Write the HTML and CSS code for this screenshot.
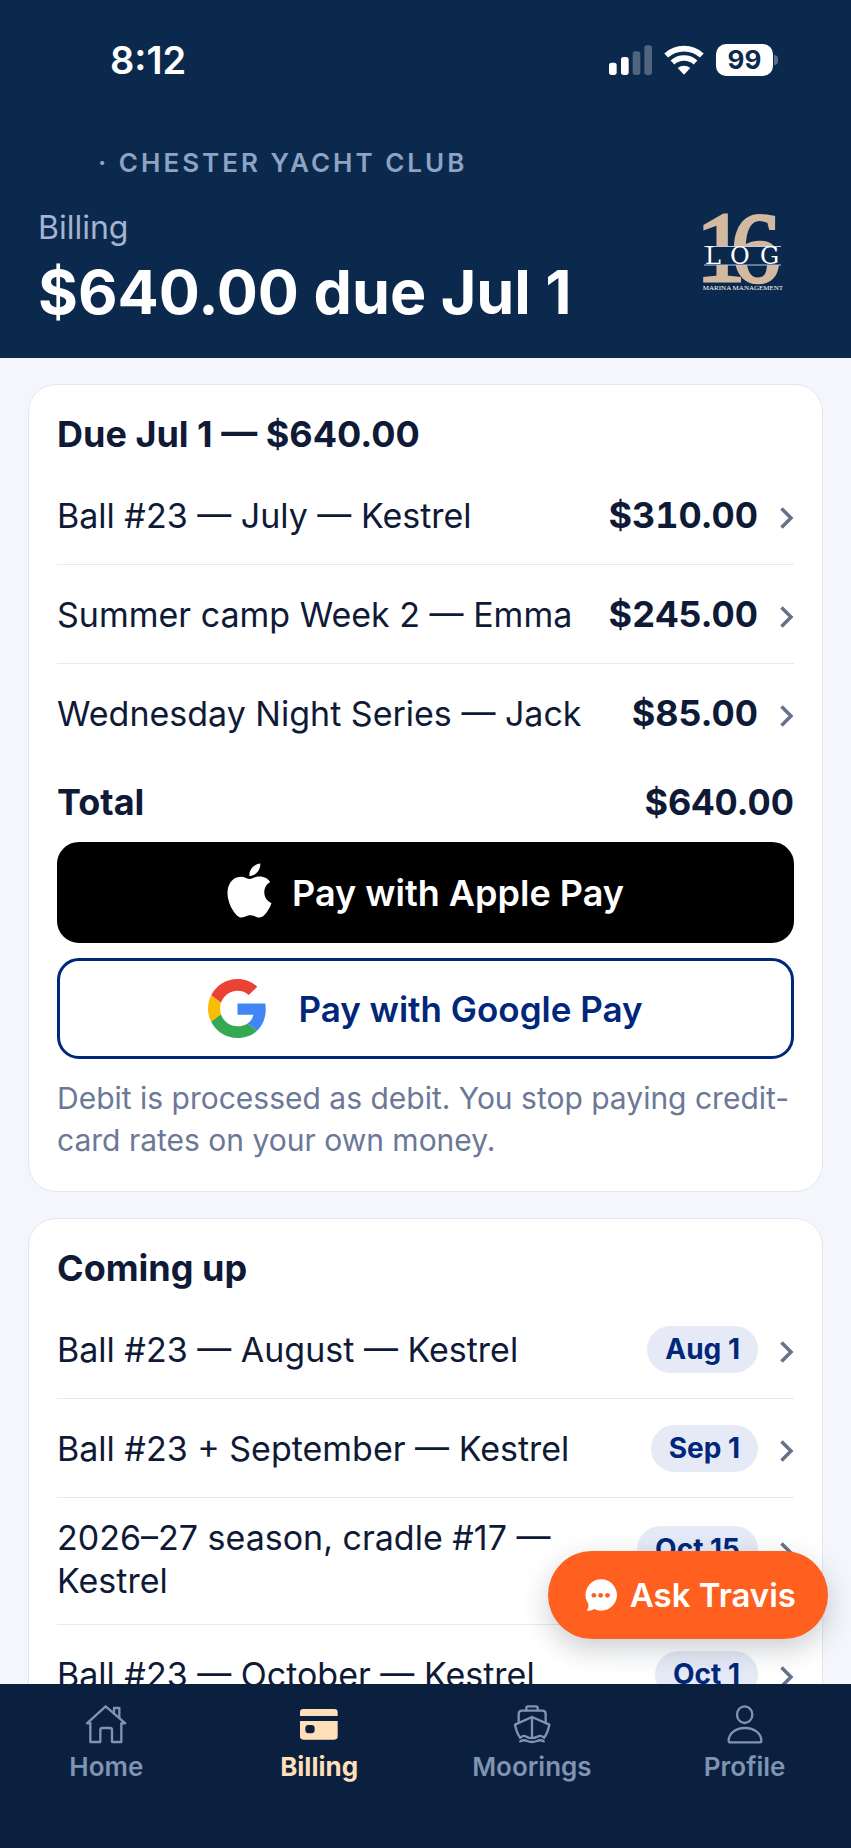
FILE: index.html
```html
<!DOCTYPE html>
<html lang="en">
<head>
<meta charset="utf-8">
<meta name="viewport" content="width=device-width, initial-scale=1">
<title>Billing</title>
<link rel="stylesheet" href="styles.css">
</head>
<body>
<svg class="sprite" aria-hidden="true">
  <symbol id="chevron" viewBox="0 0 14 22"><path d="M1.500 1.500l9.500 9.500-9.500 9.500" fill="none" stroke="currentColor" stroke-width="3.500"/></symbol>
</svg>
<div class="app">
  <header class="header">
    <div class="status">
      <span class="time">8:12</span>
      <div class="indicators">
        <svg class="signal" viewBox="57 45 129 90" fill="#fff" aria-label="Signal">
          <rect x="57" y="98" width="23" height="37" rx="8"/>
          <rect x="93" y="81" width="23" height="54" rx="8"/>
          <g opacity=".28"><rect x="128" y="64" width="23" height="71" rx="8"/><rect x="163" y="46" width="23" height="89" rx="8"/></g>
        </svg>
        <svg class="wifi" viewBox="220 44 120 91" fill="none" stroke="#fff" stroke-width="17" aria-label="Wi-Fi">
          <path d="M226 76A80 80 0 0 1 334 76"/>
          <path d="M245 97A52 52 0 0 1 315 97"/>
          <path d="M261 114A28 28 0 0 1 299 114L280 134z" fill="#fff" stroke="none"/>
        </svg>
        <div class="battery"><span class="battery-level">99</span><span class="battery-nub"></span></div>
      </div>
    </div>
    <p class="club"><span>·</span> CHESTER YACHT CLUB</p>
    <div class="heading">
      <div>
        <p class="eyebrow">Billing</p>
        <h1 class="amount">$640.00 due Jul 1</h1>
      </div>
      <svg class="logo" viewBox="0 0 80 80" role="img" aria-label="16 Log Marina Management">
        <text class="logo-number" x="-7 28" y="69">16</text>
        <rect class="logo-band" x="0" y="34" width="80" height="19"/>
        <path d="M1 34.500h77M1 53h77" stroke="#b9cbe2" stroke-width="1"/>
        <text class="logo-word" x="2 27 57" y="52">LOG</text>
        <text class="logo-tag" x="40" y="78" text-anchor="middle">MARINA MANAGEMENT</text>
      </svg>
    </div>
  </header>

  <main class="content">
    <section class="card">
      <h2 class="card-title">Due Jul 1 — $640.00</h2>
      <ul class="rows">
        <li><a class="row" href="#"><span class="label">Ball #23 — July — Kestrel</span><span class="price">$310.00</span><svg class="chevron"><use href="#chevron"/></svg></a></li>
        <li><a class="row" href="#"><span class="label">Summer camp Week 2 — Emma</span><span class="price">$245.00</span><svg class="chevron"><use href="#chevron"/></svg></a></li>
        <li><a class="row" href="#"><span class="label">Wednesday Night Series — Jack</span><span class="price">$85.00</span><svg class="chevron"><use href="#chevron"/></svg></a></li>
      </ul>
      <p class="total"><span>Total</span><span>$640.00</span></p>
      <div class="pay">
        <button class="pay-button apple" type="button">
          <svg class="apple-icon" viewBox="2 0 20 24" fill="#fff" aria-hidden="true"><path d="M12.152 6.896c-.948 0-2.415-1.078-3.96-1.04-2.04.027-3.91 1.183-4.961 3.014-2.117 3.675-.546 9.103 1.519 12.09 1.013 1.454 2.208 3.09 3.792 3.039 1.52-.065 2.09-.987 3.935-.987 1.831 0 2.35.987 3.96.948 1.637-.026 2.676-1.48 3.676-2.948 1.156-1.688 1.636-3.325 1.662-3.415-.039-.013-3.182-1.221-3.22-4.857-.026-3.04 2.48-4.494 2.597-4.559-1.429-2.09-3.623-2.324-4.39-2.376-2-.156-3.675 1.09-4.61 1.09zM15.53 3.83c.843-1.012 1.4-2.427 1.245-3.83-1.207.052-2.662.805-3.532 1.818-.78.896-1.454 2.338-1.273 3.714 1.338.104 2.715-.688 3.559-1.701"/></svg>
          Pay with Apple Pay
        </button>
        <button class="pay-button google" type="button">
          <svg class="google-icon" viewBox="0 0 48 48" aria-hidden="true">
            <path fill="#ea4335" d="M24 9.500c3.540 0 6.710 1.220 9.210 3.600l6.850-6.850C35.900 2.380 30.470 0 24 0 14.620 0 6.510 5.380 2.560 13.220l7.980 6.190C12.430 13.720 17.740 9.500 24 9.500z"/>
            <path fill="#4285f4" d="M46.980 24.550c0-1.570-.15-3.090-.38-4.550H24v9.020h12.940c-.58 2.960-2.260 5.480-4.780 7.180l7.730 6c4.510-4.180 7.090-10.360 7.090-17.650z"/>
            <path fill="#fbbc05" d="M10.530 28.590c-.48-1.450-.76-2.990-.76-4.590s.27-3.140.76-4.590l-7.980-6.190C.92 16.460 0 20.120 0 24c0 3.880.92 7.540 2.560 10.780l7.970-6.190z"/>
            <path fill="#34a853" d="M24 48c6.480 0 11.930-2.130 15.890-5.810l-7.730-6c-2.150 1.450-4.920 2.300-8.160 2.300-6.260 0-11.570-4.220-13.470-9.910l-7.980 6.190C6.510 42.620 14.620 48 24 48z"/>
          </svg>
          Pay with Google Pay
        </button>
      </div>
      <p class="note">Debit is processed as debit. You stop paying credit-card rates on your own money.</p>
    </section>

    <section class="card">
      <h2 class="card-title">Coming up</h2>
      <ul class="rows">
        <li><a class="row" href="#"><span class="label">Ball #23 — August — Kestrel</span><span class="pill">Aug 1</span><svg class="chevron"><use href="#chevron"/></svg></a></li>
        <li><a class="row" href="#"><span class="label">Ball #23 + September — Kestrel</span><span class="pill">Sep 1</span><svg class="chevron"><use href="#chevron"/></svg></a></li>
        <li><a class="row row-tall" href="#"><span class="label">2026–27 season, cradle #17 — Kestrel</span><span class="pill">Oct 15</span><svg class="chevron"><use href="#chevron"/></svg></a></li>
        <li><a class="row" href="#"><span class="label">Ball #23 — October — Kestrel</span><span class="pill">Oct 1</span><svg class="chevron"><use href="#chevron"/></svg></a></li>
      </ul>
    </section>
  </main>

  <div class="dock">
    <button class="ask" type="button">
      <svg class="ask-icon" viewBox="164 144 94 94" aria-hidden="true">
        <path fill="#fff" d="M211 145a46 46 0 1 1-20 87c-6 4-14 6-22 5 5-7 7-14 4-21a46 46 0 0 1 38-71z"/>
        <g fill="#ff5f1f"><circle cx="190" cy="192" r="7"/><circle cx="210" cy="192" r="7"/><circle cx="230" cy="192" r="7"/></g>
      </svg>
      Ask Travis
    </button>
    <nav class="tabs" aria-label="Main">
      <a class="tab" href="#">
        <svg class="tab-icon" viewBox="258 132 126 120" aria-hidden="true"><g fill="none" stroke="currentColor" stroke-width="7" stroke-linejoin="round" stroke-linecap="round"><path d="M274 190h-10l56-51 59 51h-11"/><path d="M274 190v56h30v-36q0-6 6-6h23q6 0 6 6v36h28v-56"/><path d="M345 160v-16h16v29"/></g></svg>
        Home
      </a>
      <a class="tab active" href="#" aria-current="page">
        <svg class="tab-icon" viewBox="899 132 126 120" aria-hidden="true"><path fill="currentColor" fill-rule="evenodd" d="M905 168v-11q0-10 10-10h93q10 0 10 10v11zM905 183h113v46q0 10-10 10h-93q-10 0-10-10zM931 195q-10 0-10 10v5q0 10 10 10h8q10 0 10-10v-5q0-10-10-10z"/></svg>
        Billing
      </a>
      <a class="tab" href="#">
        <svg class="tab-icon" viewBox="243 132 126 120" aria-hidden="true"><g fill="none" stroke="currentColor" stroke-width="7" stroke-linejoin="round" stroke-linecap="round"><path d="M289 151v-7q0-5 5-5h24q5 0 5 5v7"/><path d="M266 186v-24q0-10 10-10h61q10 0 10 10v24"/><path d="M271 233c-8-10-13-24-16-39l51-23 52 23c-3 15-8 29-16 39"/><path d="M306 173v58"/><path d="M271 233q10-9 18-3 16 9 34 0 9-6 19 3"/><path d="M271 244q11-6 20-1 15 6 30 0 10-5 20 1"/></g></svg>
        Moorings
      </a>
      <a class="tab" href="#">
        <svg class="tab-icon" viewBox="880 132 126 120" aria-hidden="true"><g fill="none" stroke="currentColor" stroke-width="7" stroke-linejoin="round"><ellipse cx="942" cy="164" rx="23" ry="25"/><path d="M894 242c0-22 21-38 49-38s49 16 49 38q0 5-5 5h-88q-5 0-5-5z"/></g></svg>
        Profile
      </a>
    </nav>
  </div>
</div>
</body>
</html>
```
FILE: styles.css
```css
* { box-sizing: border-box; }

body {
  margin: 0;
  font-family: Inter, "Liberation Sans", sans-serif;
  color: #0f1a36;
  background: #f4f6fb;
}

h1, h2, p, ul { margin: 0; padding: 0; }
ul { list-style: none; }
a { color: inherit; text-decoration: none; }
button { font-family: inherit; cursor: pointer; }
.sprite { display: none; }

.app {
  display: flex;
  flex-direction: column;
  height: 100vh;
  overflow: hidden;
}

.header {
  flex: none;
  padding: 36px 68px 28px 38px;
  color: #fff;
  background: #0b294c;
}

.status {
  display: flex;
  align-items: center;
  justify-content: space-between;
  height: 48px;
  padding: 0 5px 0 72px;
}
.time { font-size: 38px; font-weight: 600; }
.indicators { display: flex; align-items: center; gap: 12px; }
.signal { width: 43px; height: 30px; }
.wifi { width: 40px; height: 30px; }
.battery { display: flex; align-items: center; gap: 1px; }
.battery-level {
  width: 57px;
  border-radius: 10px;
  background: #fff;
  color: #0b294c;
  font-size: 26px;
  font-weight: 700;
  line-height: 32px;
  text-align: center;
}
.battery-nub {
  width: 4px;
  height: 10px;
  border-radius: 0 4px 4px 0;
  background: #5a6f8c;
}

.club {
  padding: 63px 0 0 60px;
  color: #8ea3c4;
  font-size: 26px;
  font-weight: 600;
  line-height: 32px;
  letter-spacing: 3px;
}

.heading {
  display: flex;
  align-items: flex-start;
  justify-content: space-between;
  padding-top: 27px;
}
.eyebrow { padding-bottom: 4px; color: #a3b3d2; font-size: 32px; line-height: 44px; }
.amount { font-size: 61px; font-weight: 700; line-height: 76px; }
.logo { flex: none; width: 80px; height: 80px; margin-top: 6px; }
.logo-number {
  fill: #d3b9a0;
  stroke: #d3b9a0;
  stroke-width: 3px;
  font: 99px "Liberation Serif", serif;
}
.logo-band { fill: #0b294c; }
.logo-word { fill: #fff; font: 24px "DejaVu Serif", serif; }
.logo-tag { fill: #fff; font: 7px "Liberation Serif", serif; }

.content {
  display: flex;
  flex: 1;
  flex-direction: column;
  gap: 26px;
  min-height: 0;
  padding: 26px 28px;
  overflow-y: auto;
  scrollbar-width: none;
}

.card {
  flex: none;
  padding: 28px 28px 30px;
  border: 1px solid #e2e6f2;
  border-radius: 28px;
  background: #fff;
}
.card-title { margin-bottom: 10px; font-size: 36px; font-weight: 700; line-height: 43px; }

.rows li + li { border-top: 1px solid #e6e9f0; }
.row {
  display: flex;
  align-items: center;
  min-height: 98px;
  padding: 20px 0;
  font-size: 34px;
  line-height: 43px;
}
.label { flex: 1; }
.price { font-size: 36px; font-weight: 700; font-variant-numeric: tabular-nums; }
.chevron { flex: none; width: 14px; height: 22px; margin: 5px 0 0 22px; color: #66728d; }
.pill {
  padding: 0 18px;
  border-radius: 24px;
  background: #e6eaf6;
  color: #00277a;
  font-size: 28px;
  font-weight: 700;
  line-height: 47px;
}
.row-tall { align-items: flex-start; padding: 18px 0 22px; }
.row-tall .pill { margin-top: 10px; }
.row-tall .chevron { margin-top: 26px; }

.total {
  display: flex;
  justify-content: space-between;
  padding: 19px 0 18px;
  font-size: 36px;
  font-weight: 700;
  font-variant-numeric: tabular-nums;
  line-height: 43px;
}

.pay { display: flex; flex-direction: column; gap: 15px; }
.pay-button {
  display: flex;
  align-items: center;
  justify-content: center;
  width: 100%;
  height: 101px;
  border: 3px solid #000;
  border-radius: 22px;
  font-size: 36px;
  font-weight: 600;
}
.apple { gap: 20px; background: #000; color: #fff; }
.google { gap: 31px; border-color: #00277a; background: #fff; color: #00277a; font-size: 35px; }
.apple-icon { width: 45px; height: 55px; margin-bottom: 4px; }
.google-icon { width: 59px; height: 59px; }

.note { padding-top: 18px; color: #6b7896; font-size: 30px; line-height: 42px; }

.dock { position: relative; flex: none; }
.ask {
  position: absolute;
  right: 23px;
  bottom: 100%;
  display: flex;
  align-items: center;
  gap: 13px;
  height: 88px;
  margin-bottom: 45px;
  padding: 0 32px 0 37px;
  border: 0;
  border-radius: 44px;
  background: #ff5f1f;
  box-shadow: 0 10px 28px rgba(20, 30, 50, .22);
  color: #fff;
  font-size: 33px;
  font-weight: 600;
}
.ask-icon { width: 32px; height: 32px; }

.tabs {
  display: grid;
  grid-template-columns: repeat(4, 1fr);
  padding: 20px 0 65px;
  background: #0b203e;
}
.tab {
  display: flex;
  flex-direction: column;
  align-items: center;
  gap: 7px;
  color: #7f93b3;
  font-size: 26px;
  font-weight: 600;
  line-height: 32px;
}
.tab-icon { width: 42px; height: 40px; }
.active { color: #ffdfba; font-weight: 700; }
```
